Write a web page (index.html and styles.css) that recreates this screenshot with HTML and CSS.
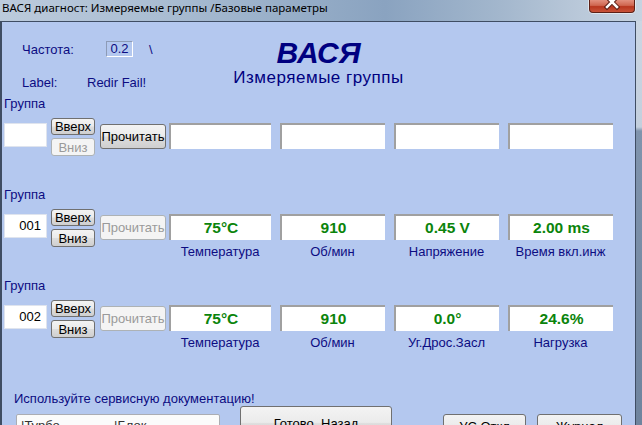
FILE: index.html
```html
<!DOCTYPE html>
<html lang="ru">
<head>
  <meta charset="UTF-8">
  <title>ВАСЯ диагност</title>
  <link rel="stylesheet" href="styles.css">
</head>
<body>
  <div class="window">
    <div class="titlebar">
      <span class="title">ВАСЯ диагност: Измеряемые группы /Базовые параметры</span>
      <div class="close">
        <svg width="16" height="11" viewBox="0 0 16 11">
          <path d="M3 -3 L13 7 M13 -3 L3 7" stroke="#5a1d14" stroke-width="4.5" stroke-linecap="square"/>
          <path d="M3 -3 L13 7 M13 -3 L3 7" stroke="#fff" stroke-width="2.5" stroke-linecap="square"/>
        </svg>
      </div>
    </div>
    <div class="main">
      <div class="client">
        <div class="header">
          <div class="info">
            <div class="info-row">
              <span class="info-label">Частота:</span>
              <span class="freq">0.2</span>
              <span class="slash">\</span>
            </div>
            <div class="info-row">
              <span class="info-label short">Label:</span>
              <span>Redir Fail!</span>
            </div>
          </div>
          <div class="brand">
            <div class="brand-name">ВАСЯ</div>
            <div class="brand-sub">Измеряемые группы</div>
          </div>
          <div></div>
        </div>

        <div class="groups">
          <div class="group">
            <div class="group-label">Группа</div>
            <div class="controls">
              <div class="grp-input"></div>
              <div class="updown">
                <button class="btn up">Вверх</button>
                <button class="btn down" disabled>Вниз</button>
              </div>
              <button class="btn read">Прочитать</button>
              <div class="cells">
                <div class="cell"><div class="value"></div><div class="caption"></div></div>
                <div class="cell"><div class="value"></div><div class="caption"></div></div>
                <div class="cell"><div class="value"></div><div class="caption"></div></div>
                <div class="cell"><div class="value"></div><div class="caption"></div></div>
              </div>
            </div>
          </div>

          <div class="group">
            <div class="group-label">Группа</div>
            <div class="controls">
              <div class="grp-input">001</div>
              <div class="updown">
                <button class="btn up">Вверх</button>
                <button class="btn down">Вниз</button>
              </div>
              <button class="btn read" disabled>Прочитать</button>
              <div class="cells">
                <div class="cell"><div class="value">75°C</div><div class="caption">Температура</div></div>
                <div class="cell"><div class="value">910</div><div class="caption">Об/мин</div></div>
                <div class="cell"><div class="value">0.45 V</div><div class="caption">Напряжение</div></div>
                <div class="cell"><div class="value">2.00 ms</div><div class="caption">Время вкл.инж</div></div>
              </div>
            </div>
          </div>

          <div class="group">
            <div class="group-label">Группа</div>
            <div class="controls">
              <div class="grp-input">002</div>
              <div class="updown">
                <button class="btn up">Вверх</button>
                <button class="btn down">Вниз</button>
              </div>
              <button class="btn read" disabled>Прочитать</button>
              <div class="cells">
                <div class="cell"><div class="value">75°C</div><div class="caption">Температура</div></div>
                <div class="cell"><div class="value">910</div><div class="caption">Об/мин</div></div>
                <div class="cell"><div class="value">0.0°</div><div class="caption">Уг.Дрос.Засл</div></div>
                <div class="cell"><div class="value">24.6%</div><div class="caption">Нагрузка</div></div>
              </div>
            </div>
          </div>
        </div>

        <div class="note">Используйте сервисную документацию!</div>
        <div class="footer-row">
          <div class="combo"><span class="combo-a">|Турбо</span><span>|Блок</span></div>
          <button class="btn done">Готово, Назад</button>
          <button class="btn basic">УС Откл</button>
          <button class="btn log">Журнал</button>
        </div>
      </div>
      <div class="side"></div>
    </div>
  </div>
</body>
</html>
```

FILE: styles.css
```css
body {
  margin: 0;
  width: 642px;
  height: 425px;
  overflow: hidden;
  font-family: 'Liberation Sans', Arial, sans-serif;
  background-color: #b4c8ef;
}
.window {
  display: flex;
  flex-direction: column;
  height: 425px;
}
.titlebar {
  height: 21px;
  flex-shrink: 0;
  display: flex;
  justify-content: space-between;
  align-items: flex-start;
  background: linear-gradient(to right, #bccbdc 0%, #aabdd2 25%, #97aec8 45%, #8aa3c0 60%, #a3b7cd 78%, #b9c8d9 90%, #c6d3e1 100%);
}
.title {
  font-family: 'Noto Sans', sans-serif;
  font-size: 11.5px;
  line-height: 16px;
  padding-left: 2px;
  color: #000;
}
.close {
  width: 46px;
  height: 13px;
  margin-right: 7px;
  box-sizing: border-box;
  border: 1px solid #5e2016;
  border-top: none;
  border-radius: 0 0 4px 4px;
  background: linear-gradient(#e2907f 0%, #cf6650 45%, #b8361f 55%, #c9543a 100%);
  box-shadow: 0 0 0 1px rgba(255, 255, 255, 0.5);
  display: flex;
  justify-content: center;
  align-items: flex-start;
}
.main {
  display: flex;
  flex: 1;
  min-height: 0;
}
.client {
  width: 636px;
  flex-shrink: 0;
  box-sizing: border-box;
  border-left: 2px solid #3f4d63;
  border-right: 1px solid #3f4d63;
  border-top: 1px solid #3f4d63;
  background-color: #b4c8ef;
  color: #0c0c82;
}
.side {
  flex: 1;
  background: linear-gradient(to bottom, #cbd6e3 0, #c3cfdd 106px, #8094ad 110px, #6f849e 100%);
}

/* header */
.header {
  display: grid;
  grid-template-columns: 1fr auto 1fr;
  height: 68px;
}
.info {
  padding: 19px 0 0 20px;
}
.info-row {
  display: flex;
  align-items: center;
  height: 16px;
  font-size: 13px;
}
.info-row + .info-row {
  margin-top: 17px;
}
.info-label {
  width: 84px;
}
.info-label.short {
  width: 65px;
}
.freq {
  width: 27px;
  height: 16px;
  box-sizing: border-box;
  border: 1px solid;
  border-color: #8d9bb6 #ffffff #ffffff #8d9bb6;
  text-align: center;
  line-height: 14px;
}
.slash {
  margin-left: 16px;
}
.brand {
  padding-top: 16px;
  text-align: center;
  color: #000080;
}
.brand-name {
  font-size: 30px;
  font-weight: bold;
  font-style: italic;
  line-height: 30px;
}
.brand-sub {
  font-size: 17px;
  letter-spacing: 0.5px;
  line-height: 18px;
  margin-top: 1px;
}

/* groups */
.groups {
  padding-top: 6px;
}
.group {
  padding-bottom: 19px;
}
.group-label {
  font-size: 13px;
  line-height: 15px;
  padding-left: 2px;
}
.controls {
  display: flex;
  align-items: flex-start;
  margin-top: 7px;
  padding-left: 2px;
}
.grp-input {
  width: 43px;
  height: 24px;
  margin-top: 5px;
  box-sizing: border-box;
  background: #fff;
  border: 1px solid #dfe4ee;
  font-size: 13px;
  line-height: 22px;
  text-align: right;
  padding-right: 5px;
  color: #000;
}
.btn {
  box-sizing: border-box;
  padding: 0;
  font-family: 'Liberation Sans', Arial, sans-serif;
  font-size: 13px;
  color: #000;
  border: 1px solid #707070;
  border-radius: 3px;
  background: linear-gradient(#f3f3f3 0%, #ebebeb 48%, #dddddd 52%, #cfcfcf 100%);
}
.btn:disabled {
  color: #9a9a9a;
  border-color: #adb2b5;
  background: #f4f4f4;
}
.updown {
  display: flex;
  flex-direction: column;
  gap: 3px;
  margin-left: 4px;
}
.btn.up {
  width: 44px;
  height: 17px;
  line-height: 14px;
}
.btn.down {
  width: 44px;
  height: 18px;
  line-height: 15px;
}
.btn.read {
  width: 66px;
  height: 25px;
  margin: 6px 0 0 5px;
}
.cells {
  display: grid;
  grid-template-columns: 102px 105px 105px 105px;
  gap: 9px;
  margin-left: 3px;
}
.value {
  height: 26px;
  margin-top: 5px;
  box-sizing: border-box;
  background: #fff;
  border-top: 2px solid #a0a0a0;
  border-left: 2px solid #a0a0a0;
  text-align: center;
  font-size: 15.5px;
  font-weight: bold;
  line-height: 23px;
  color: #0b840b;
}
.caption {
  height: 15px;
  margin-top: 4px;
  font-size: 13px;
  line-height: 15px;
  text-align: center;
}

/* footer */
.note {
  margin-top: 23px;
  padding-left: 12px;
  font-size: 13px;
  line-height: 14px;
}
.footer-row {
  display: flex;
  align-items: flex-start;
}
.combo {
  width: 204px;
  height: 22px;
  margin: 8px 0 0 14px;
  box-sizing: border-box;
  border: 1px solid #abadb3;
  border-radius: 2px;
  background: #fbfbfb;
  padding: 3px 0 0 4px;
  font-size: 13px;
  color: #333;
  display: flex;
}
.combo-a {
  width: 93px;
}
.btn.done {
  width: 152px;
  height: 34px;
  margin-left: 20px;
}
.btn.basic {
  width: 83px;
  height: 24px;
  margin: 8px 0 0 51px;
}
.btn.log {
  width: 85px;
  height: 24px;
  margin: 8px 0 0 11px;
}
```
